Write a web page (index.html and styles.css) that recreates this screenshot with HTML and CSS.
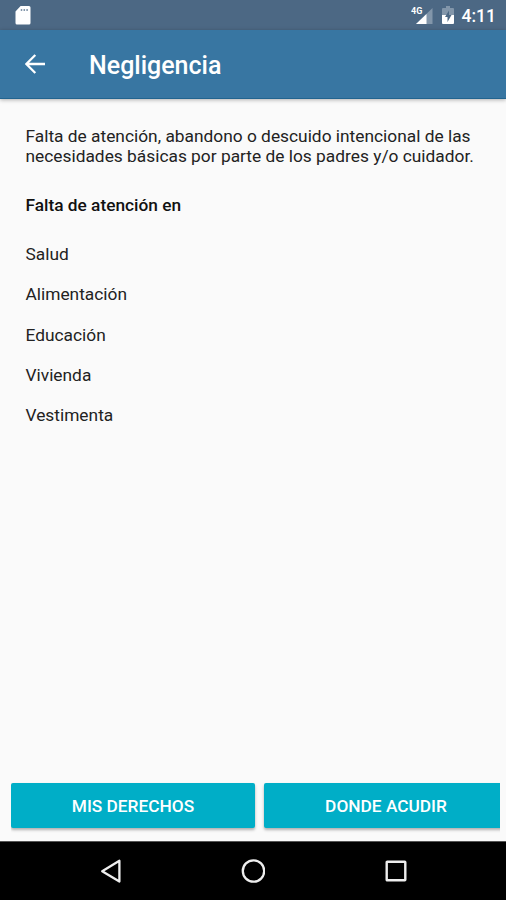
FILE: index.html
```html
<!DOCTYPE html>
<html lang="es">
<head>
  <meta charset="UTF-8">
  <meta name="viewport" content="width=device-width, initial-scale=1.0">
  <title>Negligencia</title>
  <link rel="stylesheet" href="styles.css">
</head>
<body>
  <div class="screen">
    <div class="status-bar">
      <svg class="icon-sd" width="16" height="19" viewBox="0 0 16 19">
        <path d="M5.600 0H14a1.500 1.500 0 0 1 1.500 1.500v15.500a1.500 1.500 0 0 1-1.500 1.500H2A1.500 1.500 0 0 1 .5 17V5.500z" fill="#fff"/>
        <path d="M6.500 3v2M9.300 3v2M12.100 3v2" stroke="#8296aa" stroke-width="1.500"/>
      </svg>
      <div class="status-right">
        <svg class="icon-signal" width="22" height="19" viewBox="0 0 22 19">
          <path d="M21.500 2v16H5z" fill="#8296aa"/>
          <path d="M15.500 8v10H5z" fill="#fff"/>
          <text class="network" x="0" y="8">4G</text>
        </svg>
        <svg class="icon-battery" width="12" height="18" viewBox="0 0 12 18">
          <path d="M4 0h4v2h3a1 1 0 0 1 1 1v7H0V3a1 1 0 0 1 1-1h3z" fill="#8296aa"/>
          <path d="M0 9h12v8a1 1 0 0 1-1 1H1a1 1 0 0 1-1-1z" fill="#fff"/>
          <path d="M7 4.500L3 11h2.500v5L9.500 9H7z" fill="#4c6884"/>
        </svg>
        <span class="clock">4:11</span>
      </div>
    </div>

    <header class="toolbar">
      <svg class="icon-back" width="20" height="20" viewBox="0 0 20 20">
        <path d="M20 10H1.500M10.300 1L1.300 10l9 9" fill="none" stroke="#fff" stroke-width="2.300"/>
      </svg>
      <h1 class="title">Negligencia</h1>
    </header>

    <main class="content">
      <p class="description">Falta de atención, abandono o descuido intencional de las<br>necesidades básicas por parte de los padres y/o cuidador.</p>
      <h2 class="subtitle">Falta de atención en</h2>
      <ul class="list">
        <li>Salud</li>
        <li>Alimentación</li>
        <li>Educación</li>
        <li>Vivienda</li>
        <li>Vestimenta</li>
      </ul>
    </main>

    <div class="actions">
      <button class="btn">MIS DERECHOS</button>
      <button class="btn">DONDE ACUDIR</button>
    </div>

    <nav class="nav-bar">
      <svg width="24" height="24" viewBox="0 0 24 24">
        <path d="M21.400 1.800v20.800L4.200 12.200z" fill="none" stroke="#eee" stroke-width="2.300" stroke-linejoin="round"/>
      </svg>
      <svg width="24" height="24" viewBox="0 0 24 24">
        <circle cx="12.500" cy="12" r="10.700" fill="none" stroke="#eee" stroke-width="2.300"/>
      </svg>
      <svg width="24" height="24" viewBox="0 0 24 24">
        <rect x="2.700" y="2.700" width="18.600" height="18.600" rx="0.500" fill="none" stroke="#eee" stroke-width="2.400"/>
      </svg>
    </nav>
  </div>
</body>
</html>
```
FILE: styles.css
```css
* {
  box-sizing: border-box;
}

body {
  margin: 0;
  font-family: Roboto, sans-serif;
  color: #222;
  background-color: #fafafa;
}

.screen {
  display: flex;
  flex-direction: column;
  width: 506px;
  height: 900px;
  overflow: hidden;
}

.status-bar {
  display: flex;
  justify-content: space-between;
  height: 30px;
  padding: 6px 10px 0 15px;
  background-color: #4c6884;
}

.status-right {
  display: flex;
}

.icon-battery {
  margin: 0 8px 0 9px;
}

.network {
  font-size: 9px;
  font-weight: 700;
  fill: #fff;
}

.clock {
  font-size: 17.5px;
  line-height: 20px;
  font-weight: 500;
  color: #fff;
}

.toolbar {
  display: flex;
  align-items: center;
  height: 69px;
  padding: 0 25px;
  background-color: #3876a2;
  border-bottom: 1px solid #22648f;
  box-shadow: 0 1px 4px rgba(0, 0, 0, 0.3);
}

.title {
  margin: 3px 0 0 44px;
  font-size: 25px;
  font-weight: 500;
  color: #fff;
}

.content {
  flex: 1;
  padding: 27px 25.5px 0;
  font-size: 17.33px;
  line-height: 20px;
}

.description {
  margin: 0 0 29px;
  white-space: nowrap;
}

.subtitle {
  margin: 0 0 29px;
  font-size: 17.3px;
  font-weight: 500;
  color: #111;
}

.list {
  display: flex;
  flex-direction: column;
  gap: 20.3px;
  margin: 0;
  padding: 0;
  list-style: none;
}

.actions {
  display: flex;
  gap: 9px;
  height: 58px;
  margin: 0 6px 0 11px;
  overflow-x: clip;
}

.btn {
  flex: none;
  width: 244px;
  height: 45px;
  padding: 0;
  border: none;
  border-radius: 2px;
  font-family: inherit;
  font-size: 17.3px;
  font-weight: 500;
  color: #fff;
  background-color: #00aec7;
  box-shadow: 0 2px 3px rgba(0, 0, 0, 0.3);
}

.nav-bar {
  display: flex;
  align-items: center;
  justify-content: space-between;
  height: 59px;
  padding: 0 98px;
  background-color: #000;
  border-top: 1px solid #555;
}
```
